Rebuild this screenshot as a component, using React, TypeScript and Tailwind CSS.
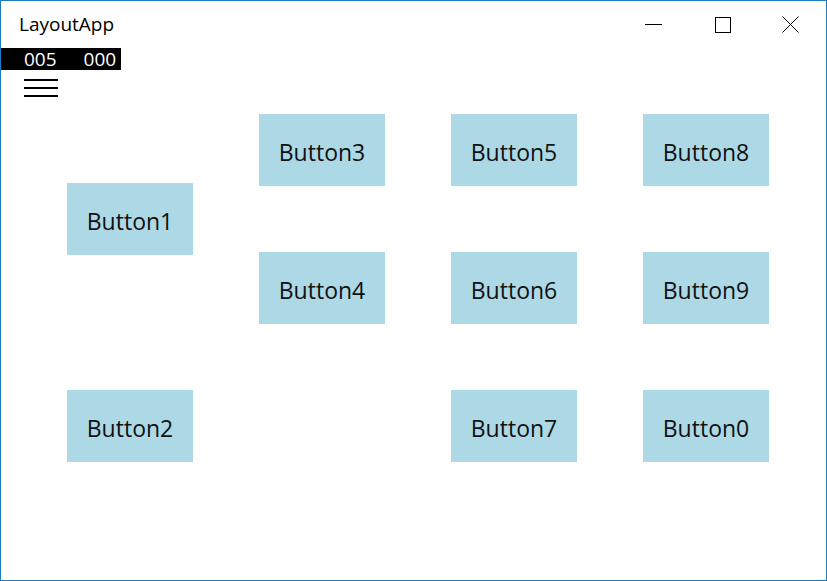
import React from "react"

const font = { fontFamily: '"Open Sans", "Noto Sans", sans-serif' }

const cells: { label: string; cls: string }[] = [
  { label: "Button1", cls: "col-start-1 row-start-1 row-span-2 self-center" },
  { label: "Button2", cls: "col-start-1 row-start-3" },
  { label: "Button3", cls: "col-start-2 row-start-1" },
  { label: "Button4", cls: "col-start-2 row-start-2" },
  { label: "Button5", cls: "col-start-3 row-start-1" },
  { label: "Button6", cls: "col-start-3 row-start-2" },
  { label: "Button7", cls: "col-start-3 row-start-3" },
  { label: "Button8", cls: "col-start-4 row-start-1" },
  { label: "Button9", cls: "col-start-4 row-start-2" },
  { label: "Button0", cls: "col-start-4 row-start-3" },
]

export default function App() {
  return (
    <div
      className="flex h-[581px] w-[827px] flex-col overflow-hidden border border-[#1f7bc1] bg-white text-black"
      style={font}
    >
      {/* title bar */}
      <div className="flex h-[47px] items-start">
        <span className="ml-[18px] mt-[11px] text-[19px] leading-[24px]">LayoutApp</span>
        <div className="ml-auto flex h-full">
          <button className="flex h-full w-[69px] items-center justify-center">
            <svg width="17" height="17" viewBox="0 0 17 17">
              <path d="M0 8.5H17" stroke="#000" strokeWidth="1" />
            </svg>
          </button>
          <button className="flex h-full w-[69px] items-center justify-center">
            <svg width="16" height="16" viewBox="0 0 16 16">
              <rect x="0.5" y="0.5" width="15" height="15" fill="none" stroke="#000" strokeWidth="1" />
            </svg>
          </button>
          <button className="mr-[2px] flex h-full w-[67px] items-center justify-center">
            <svg width="17" height="17" viewBox="0 0 17 17">
              <path d="M0.5 0.5L16.5 16.5M16.5 0.5L0.5 16.5" stroke="#000" strokeWidth="1" />
            </svg>
          </button>
        </div>
      </div>

      {/* frame counter */}
      <div className="flex h-[22px] w-[120px] items-center bg-black text-[19px] leading-none text-white">
        <span className="ml-[23px]">005</span>
        <span className="ml-[27px]">000</span>
      </div>

      {/* hamburger */}
      <div className="ml-[23px] mt-[9px] flex w-[34px] flex-col gap-[6px]">
        <div className="h-[2px] bg-black" />
        <div className="h-[2px] bg-black" />
        <div className="h-[2px] bg-black" />
      </div>

      {/* buttons */}
      <div className="ml-[66px] mt-[17px] grid grid-cols-[126px_126px_126px_126px] grid-rows-[72px_72px_72px] gap-x-[66px] gap-y-[66px]">
        {cells.map(({ label, cls }) => (
          <div
            key={label}
            className={`flex h-[72px] w-[126px] items-center justify-center bg-[#add8e6] pt-[4px] text-[23px] text-[#111] ${cls}`}
          >
            {label}
          </div>
        ))}
      </div>
    </div>
  )
}
